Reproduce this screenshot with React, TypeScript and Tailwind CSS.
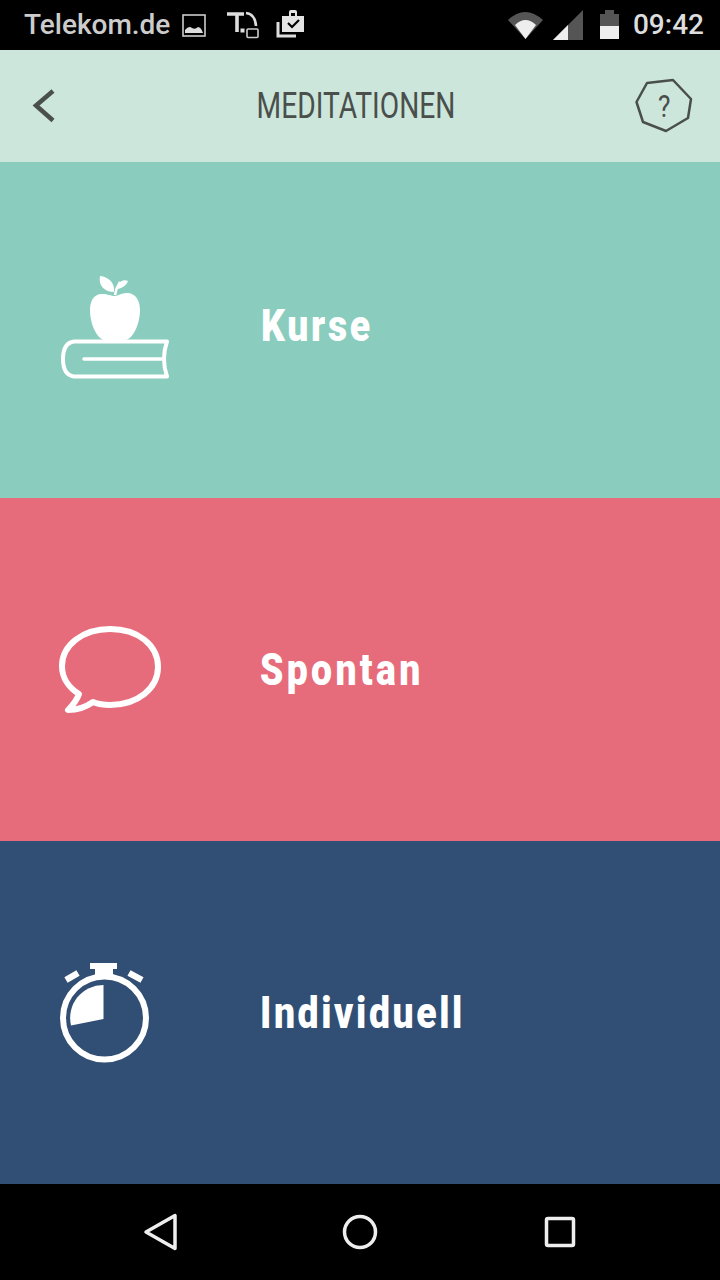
const StatusLeftIcons = () => (
  <svg width="124" height="30" viewBox="183 10 124 30" className="ml-3">
    <rect x="184" y="15" width="22" height="21" fill="none" stroke="#ccc" strokeWidth="1.6" />
    <path d="M186 33 L186 30 Q190 25 193 28 Q196 30 199 27 Q202 27 204 33 Z" fill="#ddd" />
    <path d="M228 14 H245 M238 14 V32" stroke="#ddd" strokeWidth="3.6" fill="none" />
    <rect x="241.500" y="28.500" width="4" height="4" fill="#ddd" />
    <path d="M247 13 Q256 14 257 26" stroke="#ddd" strokeWidth="2.6" fill="none" />
    <rect x="248" y="29" width="11" height="8.500" rx="1" fill="none" stroke="#ccc" strokeWidth="1.6" />
    <path d="M279 22 V36 H297" stroke="#ddd" strokeWidth="3" fill="none" />
    <path d="M283 16 H290 V12 Q290 10 292 10 H296 Q298 10 298 12 V16 H305 V32 H283 Z" fill="#e4e4e4" />
    <path d="M292 13 H296 V16 H292 Z" fill="#000" />
    <path d="M289 23 L293 27 L300 20" stroke="#000" strokeWidth="2.2" fill="none" />
  </svg>
);

const StatusRightIcons = () => (
  <svg width="112" height="32" viewBox="508 9 112 32">
    <path d="M508 20 Q525 4 543 20 L525.500 39 Z" fill="#555" />
    <path d="M515 25 Q525.500 15 536 25 L525.500 39 Z" fill="#eee" />
    <path d="M553 40 L583 10 V40 Z" fill="#555" />
    <path d="M553 40 L568 25 V40 Z" fill="#eee" />
    <path d="M600 14 H605 V10 H614 V14 H619 V26 H600 Z" fill="#555" />
    <rect x="600" y="26" width="19" height="13" fill="#eee" />
  </svg>
);

const BookIcon = () => (
  <svg width="110" height="106" viewBox="60 275 110 106" className="block">
    <path d="M167 341.500 H74 Q63 343 63 359 Q63 375 74 376.500 H167 Q161 359 167 341.500 Z" fill="none" stroke="#fff" strokeWidth="4" strokeLinejoin="round" />
    <path d="M84 359 H162" stroke="#fff" strokeWidth="3.500" strokeLinecap="round" />
    <path d="M102 294 C93 294 90 302 90 310 C90 324 97 341 108 341 C112 341 113 340 115 340 C117 340 118 341 122 341 C133 341 140 324 140 310 C140 301 136 293 127 293 C121 293 118 296 115 296 C111 296 108 294 102 294 Z" fill="#fff" />
    <path d="M100 276 C109 277 115 283 114 292 C105 292 98 286 100 276 Z" fill="#fff" />
    <path d="M115 295 C116 289 118 285 120 282" stroke="#fff" strokeWidth="2.500" fill="none" />
    <path d="M118 285 C120 281 124 279 128 281 C126 286 122 288 118 289 Z" fill="#fff" />
  </svg>
);

const ChatIcon = () => (
  <svg width="102" height="90" viewBox="59 624 102 90" className="block">
    <path
      d="M110 628 C83 628 62 644 62 665 C62 677 69 687 79 693 C77 699 73 704 68 709 C77 709 86 706 93 701 C98 703 104 704 110 704 C138 704 158 687 158 666 C158 644 138 628 110 628 Z"
      fill="none"
      stroke="#fff"
      strokeWidth="6"
      strokeLinejoin="round"
    />
  </svg>
);

const TimerIcon = () => (
  <svg width="92" height="102" viewBox="59 961 92 102" className="block">
    <circle cx="104.500" cy="1017" r="41.500" fill="none" stroke="#fff" strokeWidth="6" />
    <path d="M90 962 H117 V968 H113 V975 H95 V968 H90 Z" fill="#fff" />
    <path d="M66 979 L78 972 M129 972 L142 979" stroke="#fff" strokeWidth="6.500" fill="none" />
    <path d="M103.500 984 A 33 33 0 0 0 71 1024.500 L103.500 1018 Z" fill="#fff" />
  </svg>
);

const rowLabel = "text-[44px] leading-none font-black text-white origin-left scale-x-[0.85]";

export default function App() {
  return (
    <div className="w-[720px] h-[1280px] flex flex-col bg-black font-['Roboto',sans-serif]">
      {/* status bar */}
      <div className="h-[50px] flex items-center justify-between pl-6 pr-4 bg-black">
        <div className="flex items-center">
          <span className="text-[28px] leading-none font-medium text-[#cccccc]">Telekom.de</span>
          <StatusLeftIcons />
        </div>
        <div className="flex items-center gap-[13px]">
          <StatusRightIcons />
          <span className="text-[28px] leading-none font-medium text-[#dddddd]">09:42</span>
        </div>
      </div>

      {/* header */}
      <div className="h-[112px] flex items-center justify-between pl-8 pr-[27px] bg-[#cce6dc]">
        <svg width="24" height="36" viewBox="32 88 24 36">
          <path d="M53 91 L36 105.500 L53 120.500" fill="none" stroke="#4a4f4b" strokeWidth="4.500" />
        </svg>
        <span className="text-[36px] leading-none text-[#4a4f4b] scale-x-[0.783] whitespace-nowrap ml-[20px]">MEDITATIONEN</span>
        <div className="relative w-[58px] h-[56px] flex items-center justify-center">
          <svg width="58" height="56" viewBox="635 78 58 56" className="absolute inset-0">
            <path d="M647 83 L673 80 L691 99 L688 118 L666 131 L643 122 L636.500 102 Z" fill="none" stroke="#4a4f4b" strokeWidth="2.500" strokeLinejoin="round" />
          </svg>
          <span className="text-[31px] leading-none text-[#4a4f4b] scale-x-[0.85]">?</span>
        </div>
      </div>

      {/* menu */}
      <div className="h-[336px] flex items-center bg-[#8acdbe]">
        <div className="w-[261px] pl-[60px] mb-[4px]"><BookIcon /></div>
        <span className={`${rowLabel} tracking-[3.2px] mb-2`}>Kurse</span>
      </div>
      <div className="h-[343px] flex items-center bg-[#e66c7c]">
        <div className="w-[260px] pl-[59px]"><ChatIcon /></div>
        <span className={`${rowLabel} tracking-[3.9px]`}>Spontan</span>
      </div>
      <div className="h-[343px] flex items-center bg-[#314f74]">
        <div className="w-[260px] pl-[59px]"><TimerIcon /></div>
        <span className={`${rowLabel} tracking-[3.05px]`}>Individuell</span>
      </div>

      {/* nav bar */}
      <div className="flex-1 flex items-center gap-[163px] pl-[143px] bg-black">
        <svg width="36" height="40" viewBox="143 1212 36 40">
          <path d="M146 1232 L175 1215.500 V1248.500 Z" fill="none" stroke="#eeeeee" strokeWidth="3.500" strokeLinejoin="round" />
        </svg>
        <svg width="36" height="36" viewBox="342 1214 36 36">
          <circle cx="360" cy="1232" r="15.500" fill="none" stroke="#eeeeee" strokeWidth="3.500" />
        </svg>
        <svg width="34" height="34" viewBox="543 1215 34 34" className="ml-[2px]">
          <rect x="546.500" y="1218.500" width="27" height="27" rx="1.500" fill="none" stroke="#eeeeee" strokeWidth="3.500" />
        </svg>
      </div>
    </div>
  );
}
